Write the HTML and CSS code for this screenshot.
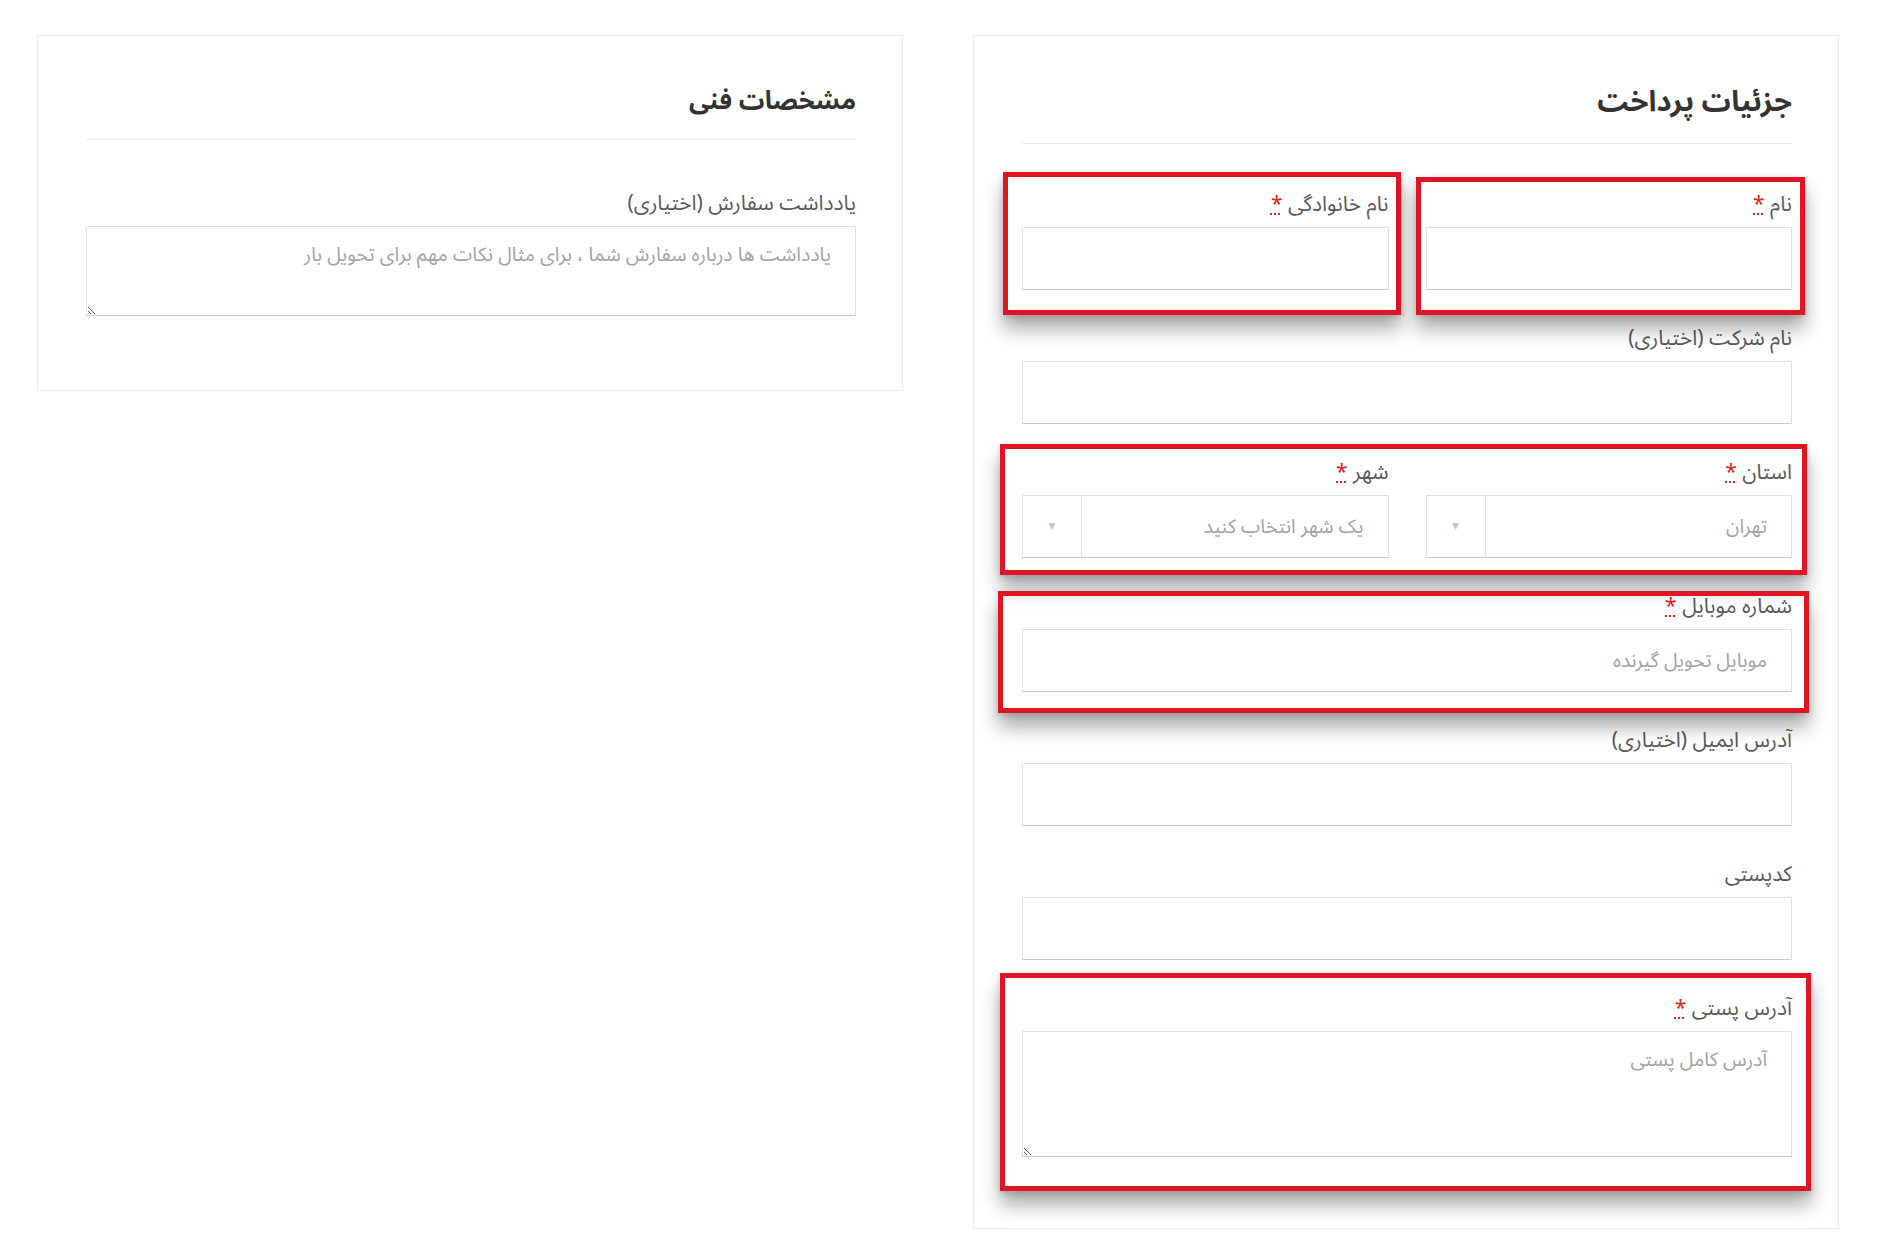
FILE: index.html
```html
<!DOCTYPE html>
<html lang="fa" dir="rtl">
<head>
<meta charset="utf-8">
<title>جزئیات پرداخت</title>
<link rel="stylesheet" href="styles.css">
</head>
<body>
<div class="page">
  <section class="panel panel-billing">
    <h3 class="panel-title">جزئیات پرداخت</h3>
    <div class="form">
      <div class="row-2">
        <div class="field">
          <label class="label">نام <abbr class="req" title="ضروری">*</abbr></label>
          <div class="input"></div>
        </div>
        <div class="field">
          <label class="label">نام خانوادگی <abbr class="req" title="ضروری">*</abbr></label>
          <div class="input"></div>
        </div>
      </div>
      <div class="field">
        <label class="label">نام شرکت (اختیاری)</label>
        <div class="input"></div>
      </div>
      <div class="row-2">
        <div class="field">
          <label class="label">استان <abbr class="req" title="ضروری">*</abbr></label>
          <div class="select"><span class="select-text">تهران</span><span class="select-arrow">▼</span></div>
        </div>
        <div class="field">
          <label class="label">شهر <abbr class="req" title="ضروری">*</abbr></label>
          <div class="select"><span class="select-text">یک شهر انتخاب کنید</span><span class="select-arrow">▼</span></div>
        </div>
      </div>
      <div class="field">
        <label class="label">شماره موبایل <abbr class="req" title="ضروری">*</abbr></label>
        <div class="input"><span class="placeholder">موبایل تحویل گیرنده</span></div>
      </div>
      <div class="field">
        <label class="label">آدرس ایمیل (اختیاری)</label>
        <div class="input"></div>
      </div>
      <div class="field">
        <label class="label">کدپستی</label>
        <div class="input"></div>
      </div>
      <div class="field">
        <label class="label">آدرس پستی <abbr class="req" title="ضروری">*</abbr></label>
        <textarea class="textarea textarea-address" placeholder="آدرس کامل پستی"></textarea>
      </div>
    </div>
  </section>

  <section class="panel panel-notes">
    <h3 class="panel-title panel-title-notes">مشخصات فنی</h3>
    <div class="form">
      <div class="field">
        <label class="label">یادداشت سفارش (اختیاری)</label>
        <textarea class="textarea textarea-notes" placeholder="یادداشت ها درباره سفارش شما ، برای مثال نکات مهم برای تحویل بار"></textarea>
      </div>
    </div>
  </section>

  <div class="mark mark-lastname"></div>
  <div class="mark mark-name"></div>
  <div class="mark mark-location"></div>
  <div class="mark mark-mobile"></div>
  <div class="mark mark-address"></div>
</div>
</body>
</html>
```

FILE: styles.css
```css
* {
  box-sizing: border-box;
}

html, body {
  margin: 0;
  padding: 0;
  background: #ffffff;
}

body {
  font-family: "Noto Sans Arabic", "Vazirmatn", "DejaVu Sans", sans-serif;
  color: #555555;
  direction: rtl;
}

.page {
  position: relative;
  display: grid;
  grid-template-columns: 866px 866px;
  column-gap: 70px;
  align-items: start;
  padding: 35px 43px 0 37px;
  width: 1882px;
  height: 1255px;
}

.panel {
  border: 1px solid #ececec;
  box-shadow: 0 0 2px rgba(0, 0, 0, 0.05);
  padding: 0 46px 37px 48px;
  background: #fff;
}

.panel-notes {
  padding-bottom: 40px;
}

.panel-title {
  margin: 0;
  padding: 46px 0 21px 0;
  font-size: 29px;
  line-height: 40px;
  font-weight: 700;
  color: #333333;
  border-bottom: 1px solid #ebebeb;
}

.panel-title-notes {
  font-size: 25.5px;
  padding: 45px 0 18px 0;
}

.form {
  padding-top: 46px;
}

.panel-notes .form {
  padding-top: 49px;
}

.row-2 {
  display: grid;
  grid-template-columns: 1fr 1fr;
  column-gap: 37px;
}

.field {
  margin-bottom: 34px;
}

.label {
  display: block;
  font-size: 21px;
  line-height: 28px;
  margin-bottom: 9px;
  color: #5a5a5a;
  white-space: nowrap;
}

.req {
  color: #e2231a;
  text-decoration: underline dotted;
  text-decoration-color: #e2231a;
  border: 0;
  cursor: help;
}

.input {
  height: 63px;
  border: 1px solid #e1e1e1;
  border-bottom-color: #c9c9c9;
  background: #fff;
  display: flex;
  align-items: center;
  padding: 0 24px;
}

.placeholder {
  color: #a3a3a3;
  font-size: 19.5px;
}

.select {
  height: 63px;
  border: 1px solid #e1e1e1;
  border-bottom-color: #c9c9c9;
  background: #fff;
  display: flex;
  align-items: stretch;
}

.select-text {
  flex: 1;
  display: flex;
  align-items: center;
  padding: 0 24px;
  color: #a3a3a3;
  font-size: 19.5px;
}

.select-arrow {
  width: 59px;
  border-right: 1px solid #e4e4e4;
  display: flex;
  align-items: center;
  justify-content: center;
  color: #c4c4c4;
  font-size: 9px;
}

.textarea {
  display: block;
  width: 100%;
  border: 1px solid #e1e1e1;
  border-bottom-color: #c9c9c9;
  border-radius: 0;
  padding: 12px 24px;
  font-family: inherit;
  font-size: 19.5px;
  line-height: 32px;
  color: #555;
  background: #fff;
  resize: vertical;
  outline: none;
}

.textarea::placeholder {
  color: #a3a3a3;
}

.textarea-address {
  height: 126px;
}

.textarea-notes {
  height: 90px;
}

.mark {
  position: absolute;
  border: 5px solid #e11426;
  box-shadow: 0 14px 18px rgba(0, 0, 0, 0.33), 0 2px 6px rgba(0, 0, 0, 0.15);
  pointer-events: none;
}

.mark-lastname {
  left: 1003px;
  top: 172px;
  width: 398px;
  height: 143px;
}

.mark-name {
  left: 1416px;
  top: 177px;
  width: 389px;
  height: 138px;
}

.mark-location {
  left: 1000px;
  top: 444px;
  width: 807px;
  height: 131px;
}

.mark-mobile {
  left: 998px;
  top: 591px;
  width: 811px;
  height: 122px;
}

.mark-address {
  left: 1000px;
  top: 973px;
  width: 811px;
  height: 218px;
}
```
